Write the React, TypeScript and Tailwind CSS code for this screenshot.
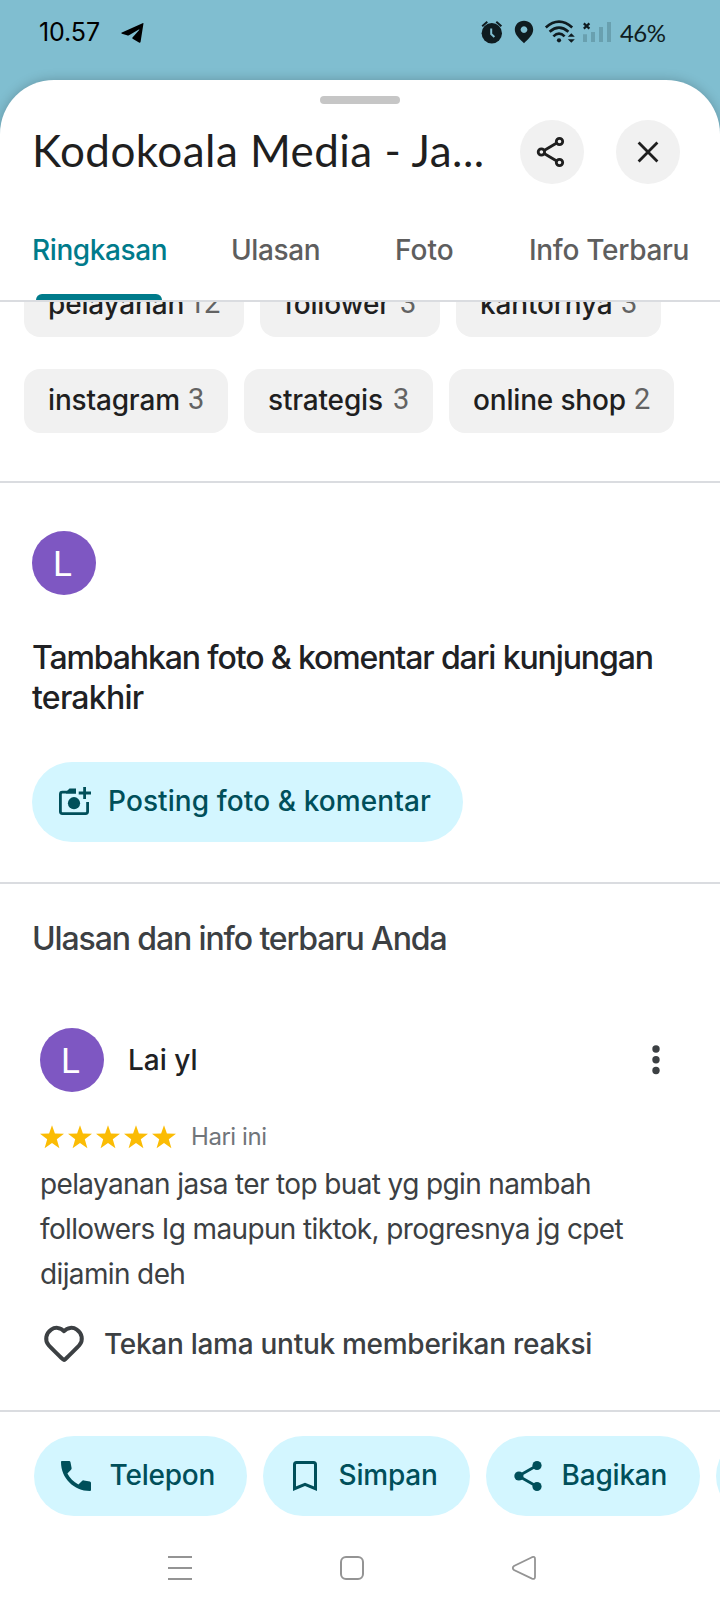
import type { ReactNode } from "react";

function StatusBar() {
  return (
    <div className="flex h-20 shrink-0 items-start text-black">
      <div className="ml-[39px] mt-[17px] flex h-8 w-[61px] items-center whitespace-nowrap text-[25px] tracking-[-0.1px]">10.57</div>
      <svg className="ml-[21px] mt-[23px] h-5 w-[23px]" viewBox="0 0 23 20" fill="#000">
        <path d="M22.5.3 L19.6 18.8 Q19.3 20.3 18 19.6 L11.6 15.7 Q11 15.2 11.5 14.6 L18.2 7 Q18.7 6.2 17.8 6.6 L8 12.2 Q7 12.7 6 12.3 L.9 10.7 Q-.4 10.1.9 9.500 L21 .4 Q22.2-.2 22.5.3Z" />
      </svg>
      <svg className="ml-[336px] mt-[20px] h-[25px] w-[142px]" viewBox="480 20 142 25">
        <g fill="#0f1c20" stroke="none">
          <circle cx="491.8" cy="33.3" r="10.2" />
          <path d="M482.2 26.2 L487.3 21.8 M501.4 26.2 L496.3 21.8" stroke="#0f1c20" strokeWidth="2" />
          <path d="M491.2 28.5 V34 L494.4 37" fill="none" stroke="#80bed0" strokeWidth="2" />
          <path fillRule="evenodd" d="M524 20.8 C518.7 20.8 514.8 24.7 514.8 29.8 C514.8 35.5 521.3 40.6 524 43.2 C526.7 40.6 533.2 35.5 533.2 29.8 C533.2 24.7 529.3 20.8 524 20.8 Z M524 26.2 A3.4 3.4 0 1 1 523.99 26.2Z" />
          <circle cx="559" cy="40.3" r="2.1" />
        </g>
        <g fill="none" stroke="#0f1c20" strokeWidth="2.7">
          <path d="M545.8 27.4 Q559 16 572.2 27.4" />
          <path d="M549.6 31.8 Q559 23.6 568.4 31.8" />
          <path d="M553.4 36.4 Q559 31 564.6 36.4" />
          <path d="M583.8 23.4 L589.4 28.6 M589.4 23.4 L583.8 28.6" strokeWidth="2.2" />
        </g>
        <path d="M571.3 33.2 L574.8 36.8 H567.8Z M571.3 42.8 L574.8 39.2 H567.8Z" fill="#0f1c20" />
        <path d="M583 34.3h4V42h-4Z M591 32h4V42h-4Z M599 27h4V42h-4Z M607 22h4V42h-4Z" fill="#69a0af" />
      </svg>
      <div className="-ml-[2px] mt-[17px] flex h-8 items-center whitespace-nowrap text-[24px] tracking-[-0.6px] font-[Lato,sans-serif] text-[#0f1c20]">46%</div>
    </div>
  );
}

function Header() {
  return (
    <div className="flex h-[72px] shrink-0 items-start pl-8 pr-10">
      <h1 className="w-[488px] shrink-0 whitespace-nowrap text-[44px] leading-[60px] tracking-[0.45px] font-[Lato,sans-serif] text-[#1f1f1f]">
        Kodokoala Media - Ja...
      </h1>
      <button className="flex size-16 items-center justify-center rounded-full bg-[#f1f1f1]" aria-label="Bagikan">
        <svg className="size-16" viewBox="0 0 64 64" fill="none" stroke="#1f1f1f" strokeWidth="2.8">
          <path d="M24.5 30.2 L36.3 23.2 M24.5 33.8 L36.3 40.8" />
          <circle cx="39.5" cy="21.5" r="3.2" />
          <circle cx="21.4" cy="32" r="3.2" />
          <circle cx="39.5" cy="42.5" r="3.2" />
        </svg>
      </button>
      <button className="ml-8 flex size-16 items-center justify-center rounded-full bg-[#f1f1f1]" aria-label="Tutup">
        <svg className="size-16" viewBox="0 0 64 64" fill="none" stroke="#1f1f1f" strokeWidth="2.8">
          <path d="M22.6 22.6 L41.4 41.4 M41.4 22.6 L22.6 41.4" />
        </svg>
      </button>
    </div>
  );
}

function Tabs() {
  return (
    <div className="flex h-[110px] shrink-0 items-stretch border-b-2 border-[#dadce0] pl-8 text-[28px] font-medium text-[#5e5e5e]">
      <div className="flex w-[199px] flex-col justify-between tracking-[-0.4px] text-[#007b8b]">
        <span className="mt-[38px] leading-[40px]">Ringkasan</span>
        <span className="ml-1 h-[6px] w-[126px] rounded-t-[6px] bg-[#007b8b]" />
      </div>
      <span className="mt-[38px] w-[164px] leading-[40px] tracking-[-0.4px]">Ulasan</span>
      <span className="mt-[38px] w-[134px] leading-[40px]">Foto</span>
      <span className="mt-[38px] whitespace-nowrap leading-[40px] tracking-[-0.3px]">Info Terbaru</span>
    </div>
  );
}

function Chip({ label, count, className }: { label: string; count: string; className: string }) {
  return (
    <div className={`flex h-16 shrink-0 items-center justify-between whitespace-nowrap rounded-2xl bg-[#f1f1f1] pb-[2px] pl-6 pr-[25px] text-[28px] font-medium tracking-[-0.17px] text-[#1f1f1f] ${className}`}>
      <span>{label}</span>
      <span className="pb-px text-[29px] tracking-[-1.2px] font-[Roboto,sans-serif] font-normal text-[#636363]">{count}</span>
    </div>
  );
}

function Avatar() {
  return (
    <div className="flex size-16 shrink-0 items-center justify-center rounded-full bg-[#7e57c2] pr-[3px] pt-[2px] text-[35px] leading-none font-[Roboto,sans-serif] text-white">
      L
    </div>
  );
}

function Stars() {
  return (
    <div className="flex gap-1">
      {[0, 1, 2, 3, 4].map((i) => (
        <svg key={i} className="size-6" viewBox="0 0 24 24" fill="#fbbc04">
          <path d="M12 .2 L14.9 8.6 L24 8.8 L16.8 14.3 L19.4 23.2 L12 18 L4.6 23.2 L7.2 14.3 L0 8.8 L9.1 8.6Z" />
        </svg>
      ))}
    </div>
  );
}

function Action({ icon, label, className }: { icon: ReactNode; label: string; className: string }) {
  return (
    <button className={`flex h-20 shrink-0 items-center whitespace-nowrap rounded-full bg-[#d3f6ff] pl-6 text-[28px] font-medium tracking-[-0.2px] text-[#004f5a] ${className}`}>
      <span className="mr-[15.5px] size-9 shrink-0">{icon}</span>
      <span className="pb-[2px]">{label}</span>
    </button>
  );
}

const phone = (
  <svg className="size-9" viewBox="0 0 36 36" fill="#004f5a">
    <path d="M3.8 3 H11 Q12.3 3 12.5 4.2 L13.6 10 Q13.8 11 13 11.8 L9.4 15.6 C11.8 20.3 15.5 23.9 20.4 26.4 L24 22.9 Q24.8 22.1 25.9 22.4 L31.9 23.6 Q33 23.9 33 25 V32 Q33 33 31.9 33 C16 33 3 20.3 3 4 Q3 3 3.8 3Z" />
  </svg>
);

const bookmark = (
  <svg className="size-9" viewBox="0 0 36 36" fill="none" stroke="#004f5a" strokeWidth="3">
    <path d="M7.5 30.7 V6.5 Q7.5 4.5 9.5 4.5 H26.5 Q28.5 4.5 28.5 6.5 V30.7 L18 26.3Z" />
  </svg>
);

const share = (
  <svg className="size-9" viewBox="0 0 36 36" fill="#004f5a">
    <path d="M27 7.5 L8.5 18 L27 28.5" fill="none" stroke="#004f5a" strokeWidth="2.8" />
    <circle cx="27" cy="7.5" r="4.6" />
    <circle cx="8.9" cy="18" r="4.6" />
    <circle cx="27" cy="28.5" r="4.6" />
  </svg>
);

function NavBar() {
  return (
    <div className="flex h-[96px] shrink-0 items-center pl-[168px]">
      <svg className="mt-[7px] h-[26px] w-[370px]" viewBox="168 1555 370 26" fill="none" stroke="#949494" strokeWidth="2">
        <path d="M168 1557 H192 M168 1568 H192 M168 1579 H192" />
        <rect x="341" y="1557" width="22" height="22" rx="5" />
        <path d="M532 1557.2 L514 1566 Q511.6 1568 514 1570 L532 1578.6 Q535 1579.6 535 1577 V1559 Q535 1556 532 1557.2Z" strokeWidth="1.8" />
      </svg>
    </div>
  );
}

export default function App() {
  return (
    <div className="flex h-[1612px] w-[720px] flex-col overflow-hidden bg-[#80bed0] font-[Inter,sans-serif]">
      <StatusBar />
      <div className="flex flex-1 flex-col rounded-t-[54px] bg-white shadow-[0_0_12px_rgba(0,0,0,0.22)]">
        <div className="flex h-10 shrink-0 justify-center pt-4">
          <div className="h-2 w-20 rounded-full bg-[#c6c6c6]" />
        </div>
        <Header />
        <Tabs />

        <div className="h-[179px] shrink-0 overflow-hidden">
          <div className="-mt-[29px] flex gap-4 pl-6">
            <Chip label="pelayanan" count="12" className="w-[220px]" />
            <Chip label="follower" count="3" className="w-[180px]" />
            <Chip label="kantornya" count="3" className="w-[205px]" />
          </div>
          <div className="mt-8 flex gap-4 pl-6">
            <Chip label="instagram" count="3" className="w-[204px]" />
            <Chip label="strategis" count="3" className="w-[189px]" />
            <Chip label="online shop" count="2" className="w-[225px]" />
          </div>
        </div>

        <section className="h-[401px] shrink-0 border-t-2 border-[#dadce0] px-8 pt-12">
          <Avatar />
          <h2 className="mt-[43px] text-[32px] font-medium leading-[40px] text-[#202124]">
            <span className="whitespace-nowrap tracking-[-1.12px]">Tambahkan foto &amp; komentar dari kunjungan</span>
            <br />
            <span className="tracking-[-0.75px]">terakhir</span>
          </h2>
          <button className="mt-[44px] flex h-20 w-[431px] items-center whitespace-nowrap rounded-full bg-[#d3f6ff] pl-6 text-[28px] font-medium text-[#004f5a]">
            <svg className="mr-4 h-9 w-9 shrink-0" viewBox="56 784 36 36" fill="none" stroke="#004f5a" strokeWidth="2.8">
              <path d="M76 792.2 H62.4 Q60.4 792.2 60.4 794.2 V811.6 Q60.4 813.6 62.4 813.6 H85.6 Q87.6 813.6 87.6 811.6 V802" />
              <path d="M66 792 L69.5 788.6 H76 V793.6 H66Z" fill="#004f5a" stroke="none" />
              <circle cx="74" cy="803.2" r="6.1" fill="#004f5a" stroke="none" />
              <path d="M78.7 793 H91 M84.6 787 V799" />
            </svg>
            <span className="pb-[2px] tracking-[0.1px]">Posting foto &amp; komentar</span>
          </button>
        </section>

        <section className="h-[528px] shrink-0 border-t-2 border-[#dadce0]">
          <h2 className="ml-8 mt-[35px] whitespace-nowrap text-[32px] font-medium leading-[40px] tracking-[-1.12px] text-[#3c4043]">
            Ulasan dan info terbaru Anda
          </h2>
          <div className="mt-[69px] flex items-center pl-10">
            <Avatar />
            <span className="ml-6 flex-1 text-[28px] font-medium text-[#202124]">Lai yl</span>
            <svg className="mr-[60px] h-[30px] w-2" viewBox="0 0 8 30" fill="#3c4043">
              <circle cx="4" cy="4" r="3.7" />
              <circle cx="4" cy="14.8" r="3.7" />
              <circle cx="4" cy="25.5" r="3.7" />
            </svg>
          </div>
          <div className="mt-[29px] flex h-8 items-center pl-10">
            <Stars />
            <span className="ml-[15px] text-[24px] tracking-[-0.45px] text-[#70757a]">Hari ini</span>
          </div>
          <p className="mt-[9px] whitespace-nowrap pl-10 text-[28px] leading-[45px] tracking-[-0.63px] text-[#3c4043]">
            pelayanan jasa ter top buat yg pgin nambah
            <br />
            followers Ig maupun tiktok, progresnya jg cpet
            <br />
            dijamin deh
          </p>
          <div className="mt-[23px] flex h-12 items-center pl-10">
            <svg className="size-12" viewBox="40 1320 48 48" fill="none" stroke="#3c4043" strokeWidth="4" strokeLinejoin="round">
              <path d="M64 1331.2 C60.5 1327.2 55 1327 51.2 1329.6 C46 1333.2 44.3 1340 48.7 1345.2 C50.5 1347.3 57 1353.5 61.5 1358 L63 1359.4 Q64 1360.3 65 1359.4 L66.5 1358 C71 1353.5 77.5 1347.3 79.3 1345.2 C83.7 1340 82 1333.2 76.8 1329.6 C73 1327 67.5 1327.2 64 1331.2Z" />
            </svg>
            <span className="ml-4 whitespace-nowrap text-[28px] font-medium tracking-[-0.28px] text-[#3c4043]">Tekan lama untuk memberikan reaksi</span>
          </div>
        </section>

        <div className="flex shrink-0 gap-4 overflow-hidden border-t-2 border-[#dadce0] pl-[34px] pt-6">
          <Action icon={phone} label="Telepon" className="w-[213px]" />
          <Action icon={bookmark} label="Simpan" className="w-[207px]" />
          <Action icon={share} label="Bagikan" className="w-[214px]" />
          <div className="h-20 w-[213px] shrink-0 rounded-full bg-[#d3f6ff]" />
        </div>
        <NavBar />
      </div>
    </div>
  );
}
